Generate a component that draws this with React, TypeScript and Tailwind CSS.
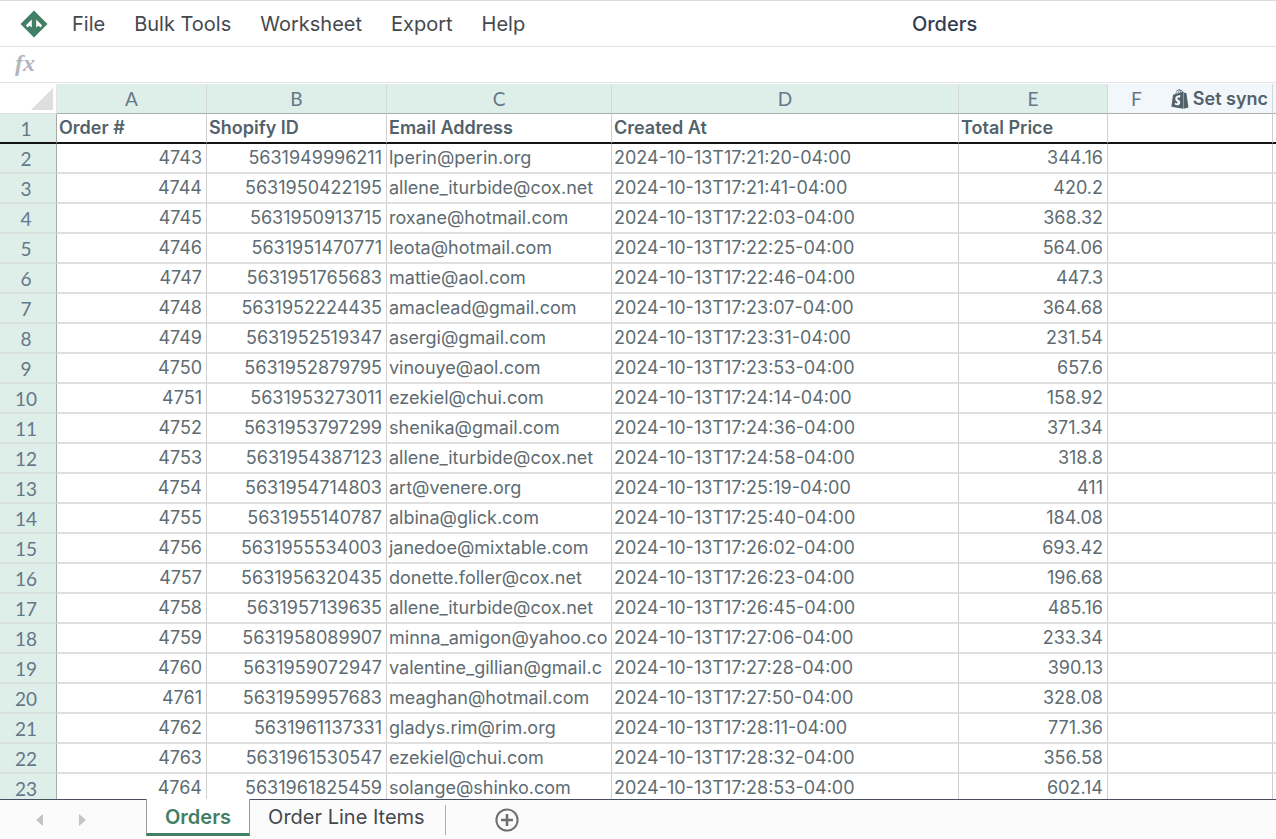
import React, { useState } from 'react';
import { FaShopify } from 'react-icons/fa';

interface Order {
  number: number;
  shopifyId: string;
  email: string;
  createdAt: string;
  total: string;
}

const orders: Order[] = [
  { number: 4743, shopifyId: '5631949996211', email: 'lperin@perin.org', createdAt: '2024-10-13T17:21:20-04:00', total: '344.16' },
  { number: 4744, shopifyId: '5631950422195', email: 'allene_iturbide@cox.net', createdAt: '2024-10-13T17:21:41-04:00', total: '420.2' },
  { number: 4745, shopifyId: '5631950913715', email: 'roxane@hotmail.com', createdAt: '2024-10-13T17:22:03-04:00', total: '368.32' },
  { number: 4746, shopifyId: '5631951470771', email: 'leota@hotmail.com', createdAt: '2024-10-13T17:22:25-04:00', total: '564.06' },
  { number: 4747, shopifyId: '5631951765683', email: 'mattie@aol.com', createdAt: '2024-10-13T17:22:46-04:00', total: '447.3' },
  { number: 4748, shopifyId: '5631952224435', email: 'amaclead@gmail.com', createdAt: '2024-10-13T17:23:07-04:00', total: '364.68' },
  { number: 4749, shopifyId: '5631952519347', email: 'asergi@gmail.com', createdAt: '2024-10-13T17:23:31-04:00', total: '231.54' },
  { number: 4750, shopifyId: '5631952879795', email: 'vinouye@aol.com', createdAt: '2024-10-13T17:23:53-04:00', total: '657.6' },
  { number: 4751, shopifyId: '5631953273011', email: 'ezekiel@chui.com', createdAt: '2024-10-13T17:24:14-04:00', total: '158.92' },
  { number: 4752, shopifyId: '5631953797299', email: 'shenika@gmail.com', createdAt: '2024-10-13T17:24:36-04:00', total: '371.34' },
  { number: 4753, shopifyId: '5631954387123', email: 'allene_iturbide@cox.net', createdAt: '2024-10-13T17:24:58-04:00', total: '318.8' },
  { number: 4754, shopifyId: '5631954714803', email: 'art@venere.org', createdAt: '2024-10-13T17:25:19-04:00', total: '411' },
  { number: 4755, shopifyId: '5631955140787', email: 'albina@glick.com', createdAt: '2024-10-13T17:25:40-04:00', total: '184.08' },
  { number: 4756, shopifyId: '5631955534003', email: 'janedoe@mixtable.com', createdAt: '2024-10-13T17:26:02-04:00', total: '693.42' },
  { number: 4757, shopifyId: '5631956320435', email: 'donette.foller@cox.net', createdAt: '2024-10-13T17:26:23-04:00', total: '196.68' },
  { number: 4758, shopifyId: '5631957139635', email: 'allene_iturbide@cox.net', createdAt: '2024-10-13T17:26:45-04:00', total: '485.16' },
  { number: 4759, shopifyId: '5631958089907', email: 'minna_amigon@yahoo.co', createdAt: '2024-10-13T17:27:06-04:00', total: '233.34' },
  { number: 4760, shopifyId: '5631959072947', email: 'valentine_gillian@gmail.c', createdAt: '2024-10-13T17:27:28-04:00', total: '390.13' },
  { number: 4761, shopifyId: '5631959957683', email: 'meaghan@hotmail.com', createdAt: '2024-10-13T17:27:50-04:00', total: '328.08' },
  { number: 4762, shopifyId: '5631961137331', email: 'gladys.rim@rim.org', createdAt: '2024-10-13T17:28:11-04:00', total: '771.36' },
  { number: 4763, shopifyId: '5631961530547', email: 'ezekiel@chui.com', createdAt: '2024-10-13T17:28:32-04:00', total: '356.58' },
  { number: 4764, shopifyId: '5631961825459', email: 'solange@shinko.com', createdAt: '2024-10-13T17:28:53-04:00', total: '602.14' },
];

const menus = ['File', 'Bulk Tools', 'Worksheet', 'Export', 'Help'];
const letters = ['A', 'B', 'C', 'D', 'E'];
const headings = ['Order #', 'Shopify ID', 'Email Address', 'Created At', 'Total Price', ''];
const sheets = ['Orders', 'Order Line Items'];

const cell = 'h-[30px] overflow-hidden border-r border-b-2 border-r-[#cfcfcf] border-b-[#e0e0e0] py-0 pl-[2px] leading-7 whitespace-nowrap';
const numberCell = `${cell} pr-1 text-right`;
const rowHead = 'h-[30px] border-r border-b-2 border-r-[#a4acaa] bg-[#deeee8] pt-px pr-1 pb-0 text-center font-[Lato,sans-serif] text-[19px] leading-[27px] font-normal text-[#64788a]';
const colHead = 'h-[30px] border-r border-b border-r-[#d3dad7] border-b-[#a9adac] bg-[#deeee8] p-0 text-center font-[Lato,sans-serif] text-[19px] leading-7 font-normal text-[#64788a]';

const Logo: React.FC = () => (
  <svg viewBox="0 0 28 28" className="size-7" aria-hidden="true">
    <path d="M14 0.5 27.5 14 14 27.5 0.5 14Z" fill="#427f66" />
    <path d="M11.8 9.5V17.6L9.6 15.8 7.4 17.6 6 15.2Z M16.2 9.5V17.6L18.4 15.8 20.6 17.6 22 15.2Z" fill="#fff" />
  </svg>
);

const MenuBar: React.FC = () => (
  <header className="flex h-[47px] shrink-0 items-center border-t border-b border-t-[#dcdcdc] border-b-[#e2e2ea] pl-5">
    <Logo />
    <nav className="ml-6 flex gap-[29px] text-xl text-[#45484d]">
      {menus.map((name) => (
        <button key={name} type="button">{name}</button>
      ))}
    </nav>
    <h1 className="flex-1 pl-[88px] text-center text-xl font-medium text-[#343c52]">Orders</h1>
  </header>
);

const Grid: React.FC = () => (
  <main className="min-h-0 flex-1 overflow-hidden pt-px">
    <table className="w-full table-fixed border-separate border-spacing-0 text-lg text-[#5e6c72]">
      <colgroup>
        <col className="w-[57px]" />
        <col className="w-[150px]" />
        <col className="w-[180px]" />
        <col className="w-[225px]" />
        <col className="w-[347px]" />
        <col className="w-[149px]" />
        <col className="w-[165px]" />
        <col />
      </colgroup>
      <thead>
        <tr>
          <th className="h-[30px] border-r border-b border-r-[#e4e4e4] border-b-[#dedede] p-0 pr-[3px]">
            <svg viewBox="0 0 22 22" className="ml-auto size-[22px]" aria-hidden="true">
              <path d="M22 0V22H0Z" fill="#dedede" />
            </svg>
          </th>
          {letters.map((letter) => (
            <th key={letter} scope="col" className={colHead}>{letter}</th>
          ))}
          <th scope="col" className="h-[30px] border-r border-b border-r-[#d3dad7] border-b-[#a9adac] bg-[#f2f7fb] p-0 pr-1 pl-[23px]">
            <div className="flex items-center justify-between">
              <span className="font-[Lato,sans-serif] text-[19px] leading-7 font-normal text-[#64788a]">F</span>
              <button type="button" className="flex items-center gap-[3px] text-lg leading-7 font-semibold text-[#53626a]">
                <FaShopify className="size-5" aria-hidden="true" />
                Set sync
              </button>
            </div>
          </th>
          <th className="border-b border-[#a9adac] bg-[#f2f7fb] p-0" />
        </tr>
      </thead>
      <tbody>
        <tr>
          <th scope="row" className={`${rowHead} border-b-[#141414]`}>1</th>
          {headings.map((heading, i) => (
            <th key={i} scope="col" className="h-[30px] border-r border-b-2 border-r-[#cfcfcf] border-b-[#141414] py-0 pl-[2px] text-left leading-7 font-semibold text-[#53626a]">{heading}</th>
          ))}
          <th className="border-b-2 border-[#141414] p-0" />
        </tr>
        {orders.map((order, i) => (
          <tr key={order.number}>
            <th scope="row" className={`${rowHead} border-b-[#d9e3de]`}>{i + 2}</th>
            <td className={numberCell}>{order.number}</td>
            <td className={numberCell}>{order.shopifyId}</td>
            <td className={cell}>{order.email}</td>
            <td className={cell}>{order.createdAt}</td>
            <td className={numberCell}>{order.total}</td>
            <td className={cell} />
            <td className="border-b-2 border-[#e0e0e0] p-0" />
          </tr>
        ))}
      </tbody>
    </table>
  </main>
);

const SheetTabs: React.FC = () => {
  const [active, setActive] = useState<string>('Orders');

  return (
    <footer className="flex h-10 shrink-0 bg-[#fbfbfb] text-xl text-[#45484d]">
      <div className="flex w-[146px] items-center gap-9 border-t border-[#4a4f60] pt-px pl-9">
        <button type="button" aria-label="Previous sheet">
          <svg viewBox="0 0 7 12" className="h-3 w-[7px]"><path d="M7 0V12L0 6Z" fill="#c4c4c4" /></svg>
        </button>
        <button type="button" aria-label="Next sheet">
          <svg viewBox="0 0 7 12" className="h-3 w-[7px]"><path d="M0 0V12L7 6Z" fill="#c4c4c4" /></svg>
        </button>
      </div>
      {sheets.map((sheet) => (
        <button
          key={sheet}
          type="button"
          onClick={() => setActive(sheet)}
          className={
            sheet === active
              ? 'h-[37px] border-r border-b-[3px] border-l border-x-[#9b9b9b] border-b-[#427f66] bg-white px-[18px] pt-[2px] font-semibold text-[#427f66]'
              : 'h-10 border-t border-[#4a4f60] px-[18px] pb-[5px]'
          }
        >
          {sheet}
        </button>
      ))}
      <div className="flex flex-1 items-center border-t border-[#4a4f60] pl-[2px]">
        <div className="h-[30px] w-px bg-[#b0b0b0]" />
        <button type="button" aria-label="Add sheet" className="ml-[49px]">
          <svg viewBox="0 0 24 24" className="size-6" fill="none" stroke="#707070">
            <circle cx="12" cy="12" r="10.6" strokeWidth="2" />
            <path d="M12 6V18M6 12H18" strokeWidth="2.6" />
          </svg>
        </button>
      </div>
    </footer>
  );
};

const App: React.FC = () => (
  <div className="flex h-screen flex-col overflow-hidden bg-white font-[Inter,sans-serif]">
    <MenuBar />
    <label className="flex h-9 shrink-0 items-center border-b border-[#e2e2ea] pl-[15px]">
      <span className="pb-1 font-['Liberation_Serif',serif] text-2xl font-bold text-[#b2b5c0] italic">fx</span>
      <input type="text" aria-label="Formula" className="ml-3 h-8 flex-1 text-lg outline-none" />
    </label>
    <Grid />
    <SheetTabs />
  </div>
);

export default App;
